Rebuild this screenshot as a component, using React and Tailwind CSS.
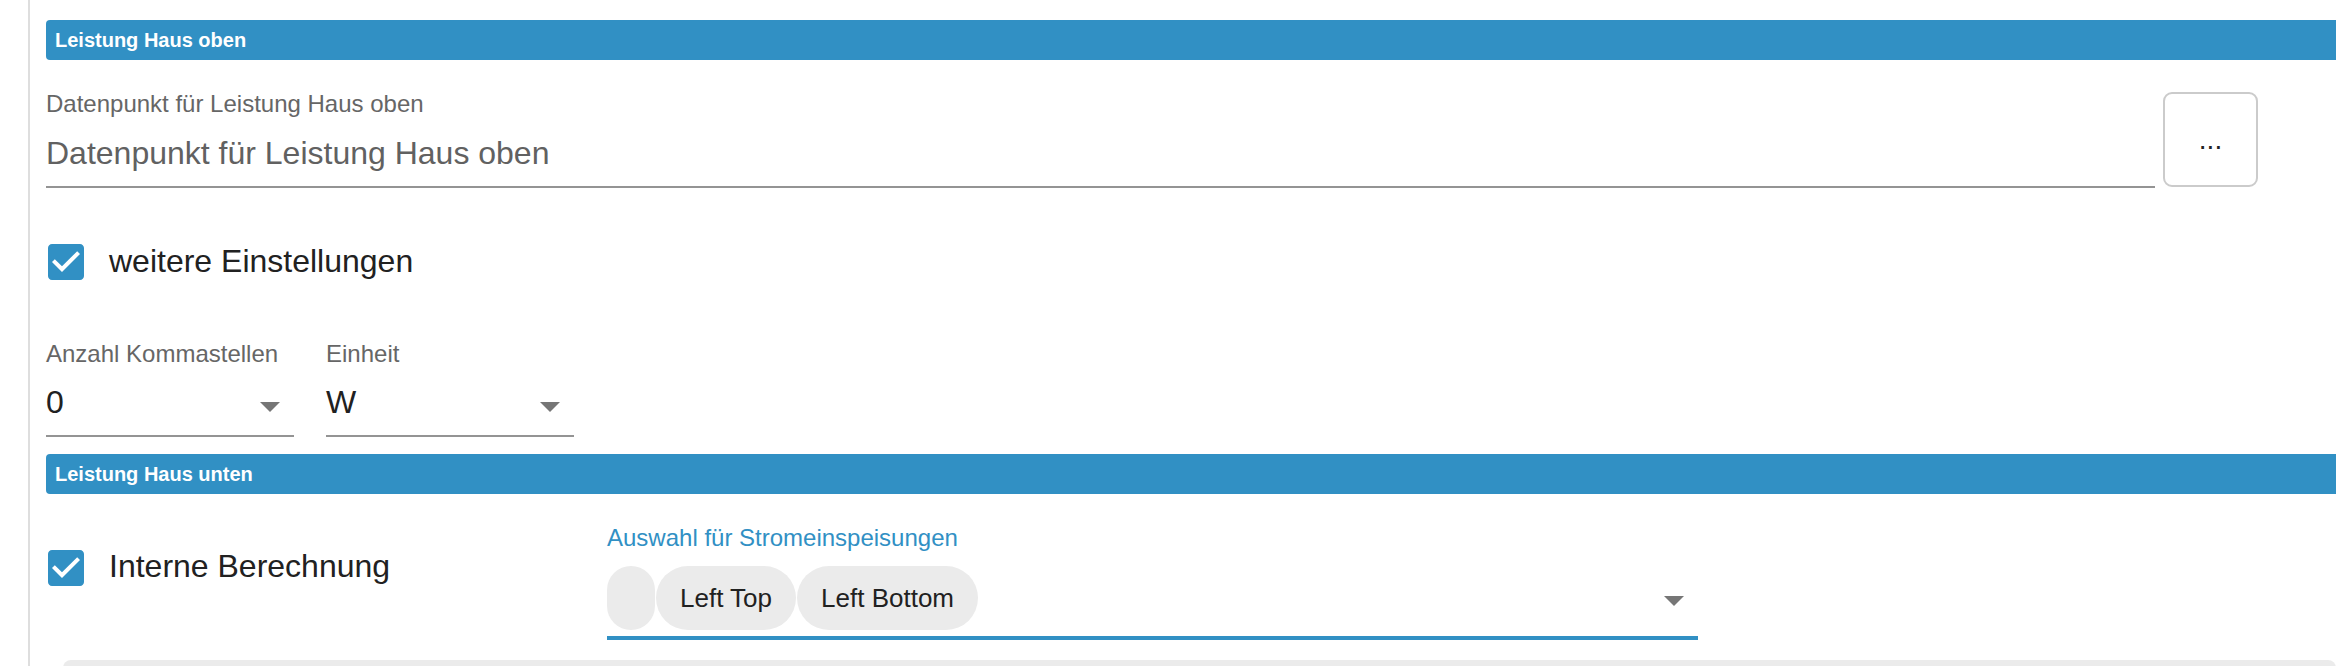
import React from "react";

function CheckBoxIcon({ className }) {
  return (
    <svg viewBox="0 0 24 24" className={className}>
      <path
        fill="#3190c4"
        d="M19 3H5c-1.11 0-2 .9-2 2v14c0 1.1.89 2 2 2h14c1.11 0 2-.9 2-2V5c0-1.1-.89-2-2-2zm-9 14l-5-5 1.41-1.41L10 14.17l7.59-7.59L19 8l-9 9z"
      />
    </svg>
  );
}

function ArrowDrop({ className }) {
  return (
    <svg viewBox="0 0 24 24" className={className}>
      <path fill="#767676" d="M7 10l5 5 5-5z" />
    </svg>
  );
}

function SelectField({ label, value }) {
  return (
    <div className="w-[248px] flex flex-col">
      <div className="text-[24px] leading-[28px] text-[#666666]">{label}</div>
      <div className="mt-[15px] h-[54px] shrink-0 border-b-2 border-[#949494] flex items-start justify-between">
        <span className="text-[32px] leading-[38px] text-[#212121]">{value}</span>
        <ArrowDrop className="w-[48px] h-[48px] shrink-0 -mt-[1px]" />
      </div>
    </div>
  );
}

function SectionHeader({ children }) {
  return (
    <div className="h-[40px] shrink-0 rounded-l-[4px] bg-[#3190c4] flex items-center pl-[9px] text-white font-bold text-[20px] leading-[24px]">
      {children}
    </div>
  );
}

export default function App() {
  return (
    <div className="w-[2336px] h-[666px] overflow-hidden bg-white flex items-start [font-family:'Liberation_Sans',Arial,sans-serif]">
      <div className="w-[28px] shrink-0" />
      <div className="w-[2px] h-[666px] shrink-0 bg-[#dedede]" />
      <div className="flex-1 flex flex-col pl-[16px] pt-[20px] min-w-0">
        <SectionHeader>Leistung Haus oben</SectionHeader>

        {/* Datenpunkt row */}
        <div className="mt-[30px] shrink-0 flex items-start gap-[8px] pr-[78px]">
          <div className="flex-1 flex flex-col">
            <div className="text-[24px] leading-[28px] text-[#666666]">
              Datenpunkt für Leistung Haus oben
            </div>
            <div className="mt-[16px] pb-[14px] border-b-2 border-[#949494]">
              <div className="text-[32px] leading-[38px] text-[#616161]">
                Datenpunkt für Leistung Haus oben
              </div>
            </div>
          </div>
          <button className="mt-[2px] w-[95px] h-[95px] shrink-0 rounded-[9px] border-2 border-[#cbcbcb] bg-white flex items-center justify-center text-[28px] leading-[32px] text-[#222222]">
            ...
          </button>
        </div>

        {/* weitere Einstellungen */}
        <div className="mt-[50px] shrink-0 flex items-start">
          <CheckBoxIcon className="w-[48px] h-[48px] shrink-0 -ml-[4px]" />
          <span className="ml-[19px] mt-[5px] text-[32px] leading-[36px] text-[#212121]">
            weitere Einstellungen
          </span>
        </div>

        {/* selects */}
        <div className="mt-[54px] shrink-0 flex items-start gap-[32px]">
          <SelectField label="Anzahl Kommastellen" value="0" />
          <SelectField label="Einheit" value="W" />
        </div>

        <div className="mt-[17px] shrink-0">
          <SectionHeader>Leistung Haus unten</SectionHeader>
        </div>

        {/* Interne Berechnung + multiselect */}
        <div className="shrink-0 flex items-start">
          <div className="w-[561px] shrink-0 flex items-start mt-[50px]">
            <CheckBoxIcon className="w-[48px] h-[48px] shrink-0 -ml-[4px]" />
            <span className="ml-[19px] mt-[4px] text-[32px] leading-[36px] text-[#212121]">
              Interne Berechnung
            </span>
          </div>
          <div className="w-[1091px] shrink-0 flex flex-col mt-[30px]">
            <div className="text-[24px] leading-[28px] text-[#3190c4]">
              Auswahl für Stromeinspeisungen
            </div>
            <div className="mt-[14px] flex items-start pb-[6px] border-b-4 border-[#3190c4]">
              <div className="flex items-center gap-[1px]">
                <div className="w-[48px] h-[64px] rounded-full bg-[#ebebeb]" />
                <div className="h-[64px] px-[24px] rounded-full bg-[#ebebeb] flex items-center text-[26px] leading-[30px] text-[#212121] whitespace-nowrap">
                  Left Top
                </div>
                <div className="h-[64px] px-[24px] rounded-full bg-[#ebebeb] flex items-center text-[26px] leading-[30px] text-[#212121] whitespace-nowrap">
                  Left Bottom
                </div>
              </div>
              <ArrowDrop className="w-[48px] h-[48px] shrink-0 ml-auto mt-[10px]" />
            </div>
          </div>
        </div>

        <div className="mt-[20px] ml-[17px] h-[40px] rounded-[8px] bg-[#ebebeb] shrink-0" />
      </div>
    </div>
  );
}
